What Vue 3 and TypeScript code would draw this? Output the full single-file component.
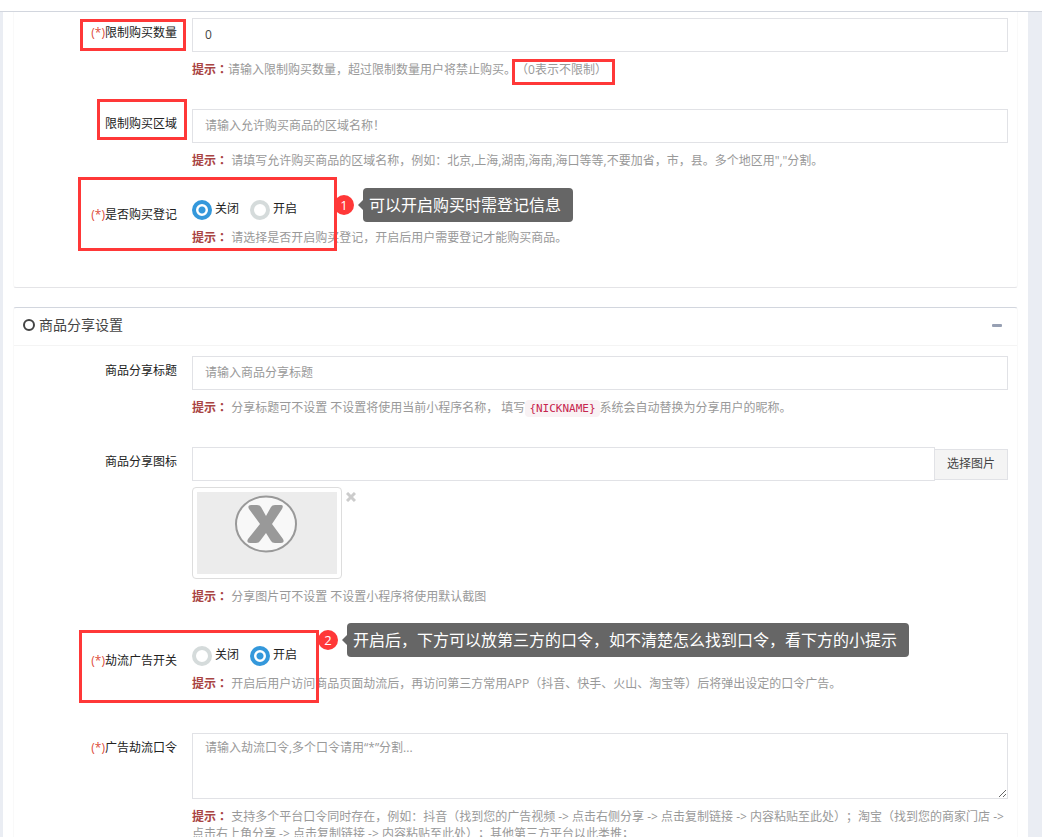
<script setup lang="ts">
import { ref } from 'vue'

const limitCount = ref('0')
const limitArea = ref('')
const register = ref('off')
const shareTitle = ref('')
const shareIcon = ref('')
const hijack = ref('on')
const command = ref('')
const collapsed = ref(false)
const showThumb = ref(true)

const options = [
  { value: 'off', text: '关闭' },
  { value: 'on', text: '开启' },
]
</script>

<template>
  <div class="page">
    <main class="frame">
      <section class="panel panel-first">
        <div class="row">
          <label class="label" for="limit-count"><span class="req">(*)</span>限制购买数量</label>
          <div class="field">
            <input id="limit-count" v-model="limitCount" class="control" type="text" />
            <p class="hint"><b class="tip">提示：</b>请输入限制购买数量，超过限制数量用户将禁止购买。（0表示不限制）</p>
          </div>
          <span class="mark mark-count"></span>
          <span class="mark mark-zero"></span>
        </div>

        <div class="row">
          <label class="label" for="limit-area">限制购买区域</label>
          <div class="field">
            <input id="limit-area" v-model="limitArea" class="control" type="text" placeholder="请输入允许购买商品的区域名称！" />
            <p class="hint"><b class="tip">提示：</b> 请填写允许购买商品的区域名称，例如：北京,上海,湖南,海南,海口等等,不要加省，市，县。多个地区用","分割。</p>
          </div>
          <span class="mark mark-area"></span>
        </div>

        <div class="row row-radio" role="radiogroup" aria-labelledby="register-label">
          <span id="register-label" class="label"><span class="req">(*)</span>是否购买登记</span>
          <div class="field">
            <div class="radios">
              <label v-for="o in options" :key="o.value" class="radio">
                <input v-model="register" type="radio" name="register" :value="o.value" />
                <span>{{ o.text }}</span>
              </label>
            </div>
            <p class="hint"><b class="tip">提示：</b> 请选择是否开启购买登记，开启后用户需要登记才能购买商品。</p>
          </div>
          <span class="mark mark-register"></span>
          <div class="note note-register">
            <span class="num">1</span>
            <span class="bubble">可以开启购买时需登记信息</span>
          </div>
        </div>
      </section>

      <section class="panel">
        <header class="head">
          <svg class="ring" viewBox="0 0 12 12" aria-hidden="true"><circle cx="6" cy="6" r="5" /></svg>
          <h2>商品分享设置</h2>
          <button class="fold" type="button" aria-label="折叠" @click="collapsed = !collapsed">
            <svg viewBox="0 0 10 3" aria-hidden="true"><rect width="10" height="3" rx="1" /></svg>
          </button>
        </header>

        <div v-if="!collapsed" class="body">
          <div class="row">
            <label class="label" for="share-title">商品分享标题</label>
            <div class="field">
              <input id="share-title" v-model="shareTitle" class="control" type="text" placeholder="请输入商品分享标题" />
              <p class="hint"><b class="tip">提示：</b> 分享标题可不设置 不设置将使用当前小程序名称， 填写<code>{NICKNAME}</code>系统会自动替换为分享用户的昵称。</p>
            </div>
          </div>

          <div class="row row-tall">
            <label class="label" for="share-icon">商品分享图标</label>
            <div class="field">
              <div class="picker">
                <input id="share-icon" v-model="shareIcon" class="control" type="text" />
                <button class="pick" type="button">选择图片</button>
              </div>
              <div v-if="showThumb" class="preview">
                <div class="thumb">
                  <svg viewBox="0 0 140 82" role="img" aria-label="暂无图片">
                    <rect width="140" height="82" fill="#ececec" />
                    <ellipse cx="69" cy="32" rx="30" ry="27.5" fill="#f8f8f8" stroke="#999" stroke-width="2" />
                    <path d="M54 13h6q3 0 4 2l5 9 5-9q1-2 4-2h6q3 0 1 4L75 32l11 15q2 4-2 4h-6q-3 0-4-2l-5-8-6 8q-1 2-4 2h-6q-4 0-2-4l12-15-11-15q-2-4 2-4z" fill="#999" />
                  </svg>
                </div>
                <button class="remove" type="button" aria-label="删除" @click="showThumb = false">
                  <svg viewBox="0 0 10 10" aria-hidden="true"><path d="M1 1l8 8M9 1L1 9" /></svg>
                </button>
              </div>
              <p class="hint"><b class="tip">提示：</b> 分享图片可不设置 不设置小程序将使用默认截图</p>
            </div>
          </div>

          <div class="row row-radio" role="radiogroup" aria-labelledby="hijack-label">
            <span id="hijack-label" class="label"><span class="req">(*)</span>劫流广告开关</span>
            <div class="field">
              <div class="radios">
                <label v-for="o in options" :key="o.value" class="radio">
                  <input v-model="hijack" type="radio" name="hijack" :value="o.value" />
                  <span>{{ o.text }}</span>
                </label>
              </div>
              <p class="hint"><b class="tip">提示：</b> 开启后用户访问商品页面劫流后，再访问第三方常用APP（抖音、快手、火山、淘宝等）后将弹出设定的口令广告。</p>
            </div>
            <span class="mark mark-hijack"></span>
            <div class="note note-hijack">
              <span class="num">2</span>
              <span class="bubble">开启后，下方可以放第三方的口令，如不清楚怎么找到口令，看下方的小提示</span>
            </div>
          </div>

          <div class="row">
            <label class="label" for="command"><span class="req">(*)</span>广告劫流口令</label>
            <div class="field">
              <textarea id="command" v-model="command" class="control area" placeholder="请输入劫流口令,多个口令请用“*”分割..."></textarea>
              <p class="hint"><b class="tip">提示：</b> 支持多个平台口令同时存在，例如：抖音（找到您的广告视频 -&gt; 点击右侧分享 -&gt; 点击复制链接 -&gt; 内容粘贴至此处）；淘宝（找到您的商家门店 -&gt; 点击右上角分享 -&gt; 点击复制链接 -&gt; 内容粘贴至此处）；其他第三方平台以此类推；</p>
            </div>
          </div>
        </div>
      </section>
    </main>
  </div>
</template>

<style>
body {
  margin: 0;
  background: #eaedf3;
}
</style>

<style scoped>
.page,
.page * {
  box-sizing: border-box;
}
.page {
  display: flow-root;
  height: 100vh;
  overflow: hidden;
  padding: 0 14px 0 3px;
  background: linear-gradient(#fff 0 11px, #d2d6de 11px 12px, #eaedf3 12px);
  font-family: "Open Sans", "Noto Sans CJK SC", sans-serif;
  font-size: 12px;
  line-height: 17px;
  text-spacing-trim: space-all;
  color: #222;
}
.frame {
  margin-top: 12px;
  min-height: 100%;
  padding: 0 10px;
  background: #fff;
}
.panel {
  border: 1px solid #f9f9f9;
  border-top-color: #d2d6de;
  border-bottom-color: #e4e4e7;
  border-radius: 3px;
  margin-bottom: 19px;
}
.panel-first {
  border-top: 0;
  border-top-left-radius: 0;
  border-top-right-radius: 0;
  padding-top: 6px;
}
.head {
  display: flex;
  align-items: center;
  gap: 4px;
  height: 38px;
  padding: 0 15px 3px 9px;
  border-bottom: 1px solid #f4f4f4;
  color: #444;
}
.head h2 {
  margin: 0;
  font-size: 14px;
  line-height: 20px;
  font-weight: 400;
}
.ring {
  width: 12px;
  height: 12px;
  fill: none;
  stroke: #444;
  stroke-width: 2;
}
.fold,
.remove {
  display: block;
  border: 0;
  padding: 0;
  background: none;
  cursor: pointer;
}
.fold {
  margin-left: auto;
}
.fold svg {
  display: block;
  width: 10px;
  height: 3px;
  fill: #97a0b3;
}
.body {
  padding-top: 10px;
}
.row {
  position: relative;
  display: grid;
  grid-template-columns: 178px minmax(0, 1fr);
  padding: 0 9px 31px 0;
}
.row-radio,
.row-tall {
  padding-bottom: 41px;
}
.label {
  padding: 6px 15px 0 0;
  text-align: right;
}
.req {
  color: #dd4b39;
}
.control {
  display: block;
  width: 100%;
  height: 34px;
  margin: 0;
  padding: 5px 12px 7px;
  border: 1px solid #e1e2e6;
  border-radius: 0;
  background: #fff;
  font: inherit;
  text-spacing-trim: inherit;
  color: #444;
  outline: none;
}
.control::placeholder {
  color: #999;
  opacity: 1;
}
.area {
  height: 66px;
  resize: vertical;
}
.hint {
  margin: 9px 0 0;
  color: #999;
}
.tip {
  font-family: "Open Sans", "Noto Sans CJK JP", sans-serif;
  font-weight: 700;
  color: #a94442;
}
code {
  padding: 2px 4px;
  border-radius: 4px;
  background: #f9f2f4;
  color: #c7254e;
  font-family: "DejaVu Sans Mono", monospace;
  font-size: 11px;
  line-height: 12px;
}
.radios {
  display: flex;
  gap: 11px;
  height: 20px;
}
.radio {
  display: flex;
  gap: 3px;
  cursor: pointer;
}
.radio input {
  appearance: none;
  width: 20px;
  height: 20px;
  margin: 0;
  border: 4px solid #d5dbdb;
  border-radius: 50%;
  background: #fff;
}
.radio input:checked {
  border-color: #3498db;
  background: radial-gradient(circle, #3498db 3px, #fff 4px);
}
.picker {
  display: flex;
}
.picker .control {
  flex: 1;
}
.pick {
  flex: none;
  width: 74px;
  height: 31px;
  margin: 2px 0 0 -1px;
  padding: 0 0 2px;
  border: 1px solid #e1e2e6;
  background: #f4f4f4;
  font: inherit;
  color: #444;
}
.preview {
  display: flex;
  gap: 4px;
  margin-top: 6px;
}
.thumb {
  width: 150px;
  padding: 4px;
  border: 1px solid #ddd;
  border-radius: 4px;
  background: #fff;
}
.thumb svg {
  display: block;
  width: 140px;
  height: 82px;
}
.remove {
  align-self: flex-start;
  margin-top: 5px;
}
.remove svg {
  display: block;
  width: 10px;
  height: 10px;
  stroke: #ccc;
  stroke-width: 3;
}
.mark {
  position: absolute;
  border: 3px solid #ff3838;
  pointer-events: none;
}
.mark-count {
  left: 66px;
  top: 1px;
  width: 106px;
  height: 32px;
}
.mark-zero {
  left: 498px;
  top: 41px;
  width: 103px;
  height: 26px;
}
.mark-area {
  left: 83px;
  top: -10px;
  width: 90px;
  height: 41px;
}
.mark-register {
  left: 64px;
  top: -23px;
  width: 259px;
  height: 74px;
}
.mark-hijack {
  left: 65px;
  top: -16px;
  width: 240px;
  height: 73px;
}
.note {
  position: absolute;
  display: flex;
  align-items: center;
  gap: 9px;
}
.note-register {
  left: 320px;
  top: -12px;
}
.note-hijack {
  left: 304px;
  top: -23px;
}
.num {
  width: 20px;
  height: 20px;
  border-radius: 50%;
  background: #ff3838;
  color: #fff;
  font-size: 13px;
  line-height: 20px;
  text-align: center;
}
.bubble {
  position: relative;
  padding: 0 12px 0 6px;
  border-radius: 4px;
  background: #666;
  color: #fff;
  font-size: 16px;
  line-height: 34px;
  white-space: nowrap;
}
.bubble::before {
  content: "";
  position: absolute;
  left: -5px;
  top: 12px;
  border: 5px solid transparent;
  border-left: 0;
  border-right-color: #666;
}
</style>
